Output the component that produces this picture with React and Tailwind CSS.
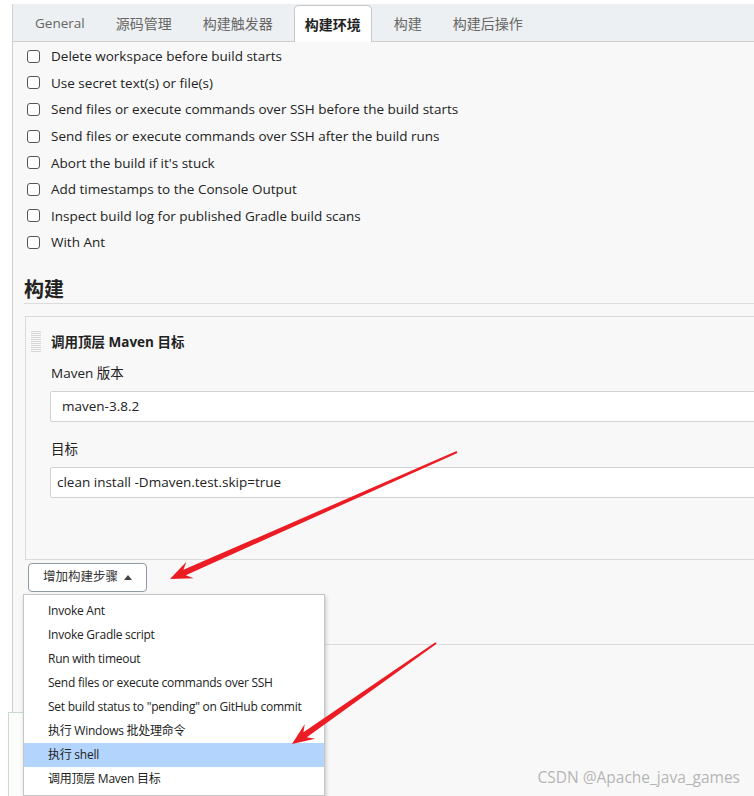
import React from 'react';

const OPTIONS = [
  'Delete workspace before build starts',
  'Use secret text(s) or file(s)',
  'Send files or execute commands over SSH before the build starts',
  'Send files or execute commands over SSH after the build runs',
  "Abort the build if it's stuck",
  'Add timestamps to the Console Output',
  'Inspect build log for published Gradle build scans',
  'With Ant',
];

const TABS = ['General', '源码管理', '构建触发器', '构建环境', '构建', '构建后操作'];

const STEPS = [
  'Invoke Ant',
  'Invoke Gradle script',
  'Run with timeout',
  'Send files or execute commands over SSH',
  'Set build status to "pending" on GitHub commit',
  '执行 Windows 批处理命令',
  '执行 shell',
  '调用顶层 Maven 目标',
];

const font = {
  fontFamily: '"Open Sans", "Noto Sans", "Noto Sans CJK SC", sans-serif',
};

function DragHandle() {
  return (
    <svg width="11" height="22" viewBox="0 0 11 22" className="shrink-0">
      {Array.from({ length: 11 }).map((_, r) =>
        Array.from({ length: 5 }).map((_, c) => (
          <rect key={r + '-' + c} x={c * 2 + 0.5} y={r * 2} width="1" height="1" fill="#b5b5b5" />
        ))
      )}
    </svg>
  );
}

// red annotation arrows drawn over the screenshot
function Arrows() {
  return (
    <svg className="absolute left-0 top-0 z-20 pointer-events-none" width="754" height="796">
      <polygon
        fill="#ec1c24"
        points="170,579 186.4,561.8 183.4,569.8 456.6,451.1 457.4,452.9 185.8,575.2 193.7,578.2"
      />
      <polygon
        fill="#ec1c24"
        points="292,744 304.8,724 303.4,732.3 435.4,642.2 436.6,643.8 306.8,737.3 315.2,738.8"
      />
    </svg>
  );
}

export default function App() {
  return (
    <div className="relative w-[754px] h-[796px] overflow-hidden bg-white text-[#333]" style={font}>
      <div className="ml-[12px] mt-[4px] w-[800px] h-[792px] border-l border-[#cfcfcf] bg-[#f8f8f8]">
        {/* tabs */}
        <div className="flex items-end h-[38px] pl-[12px] bg-[#edf0f2] border-b border-[#cfcfcf]">
          {TABS.map((t) =>
            t === '构建环境' ? (
              <div
                key={t}
                className="mr-[12px] -mb-px h-[37px] px-[10px] flex items-center bg-white border border-b-0 border-[#c8c8c8] rounded-t-[5px] text-[14px] font-bold text-[#222]"
              >
                {t}
              </div>
            ) : (
              <div
                key={t}
                className={
                  'mr-[11px] h-[36px] px-[10px] flex items-center text-[#666] ' +
                  (t === 'General' ? 'text-[13.5px]' : 'text-[14px]')
                }
              >
                {t}
              </div>
            )
          )}
        </div>

        {/* build environment options */}
        <div className="flex flex-col pt-[1px]">
          {OPTIONS.map((o) => (
            <label key={o} className="flex items-center h-[26.6px] pl-[14px] text-[13.5px] text-[#222]">
              <span className="w-[13px] h-[13px] border border-[#555] rounded-[3px] bg-white mr-[11px] shrink-0" />
              {o}
            </label>
          ))}
        </div>

        {/* build section */}
        <div className="ml-[11px] mt-[20px] h-[28px] border-b border-[#dcdcdc] text-[20px] font-bold leading-[27px] text-[#222]">
          构建
        </div>

        <div className="ml-[12px] mt-[12px] border border-[#dadada] bg-[#f8f8f8] pt-[13px] pb-[61px]">
          <div className="flex items-center h-[24px] pl-[5px]">
            <DragHandle />
            <span className="ml-[9px] text-[13.5px] font-bold text-[#222]">调用顶层 Maven 目标</span>
          </div>
          <div className="pl-[25px] mt-[8px] h-[22px] leading-[22px] text-[13.5px] text-[#222]">Maven 版本</div>
          <div className="ml-[24px] mt-[7px] h-[31px] flex items-center pl-[11px] bg-white border border-[#d2d2d2] rounded-[2px] text-[13.5px] text-[#222]">
            maven-3.8.2
          </div>
          <div className="pl-[25px] mt-[16px] h-[22px] leading-[22px] text-[13.5px] text-[#222]">目标</div>
          <div className="ml-[24px] mt-[7px] h-[31px] flex items-center pl-[6px] bg-white border border-[#d2d2d2] rounded-[2px] text-[13.5px] text-[#222]">
            clean install -Dmaven.test.skip=true
          </div>
        </div>

        {/* add step button + menu */}
        <div className="relative ml-[15px] mt-[3px] w-[119px] h-[29px]">
          <button
            type="button"
            className="w-full h-full flex items-center justify-center gap-[6px] bg-white border-[1.5px] border-[#8d99a3] rounded-[4px] text-[12.5px] text-[#333]"
          >
            增加构建步骤
            <svg width="8" height="5" viewBox="0 0 8 5">
              <path d="M0 5 L4 0 L8 5 Z" fill="#444" />
            </svg>
          </button>
          <div className="absolute left-[-5px] top-[31px] z-10 w-[302px] bg-white border border-[#c6c6c6] shadow-[1px_2px_4px_rgba(0,0,0,0.2)] py-[4px]">
            {STEPS.map((s) => (
              <div
                key={s}
                className={
                  'h-[24px] flex items-center pl-[24px] text-[12px] tracking-[-0.25px] text-[#222] ' +
                  (s === '执行 shell' ? 'bg-[#b3d4fc]' : '')
                }
              >
                {s}
              </div>
            ))}
          </div>
        </div>

        {/* next section divider, its heading sits under the open menu */}
        <div className="ml-[11px] h-[53px] border-b border-[#dcdcdc]" />
      </div>

      {/* sticky bottom bar behind the menu */}
      <div className="absolute left-[8px] top-[712px] w-[300px] h-[100px] border border-[#c9dcc9] bg-[#fbfdfb]" />

      <Arrows />

      <div
        className="absolute right-[14px] top-[766px] z-20 text-[15.5px] text-[#b4b4b4]"
        style={{ textShadow: '0 0 2px #fff' }}
      >
        CSDN @Apache_java_games
      </div>
    </div>
  );
}
